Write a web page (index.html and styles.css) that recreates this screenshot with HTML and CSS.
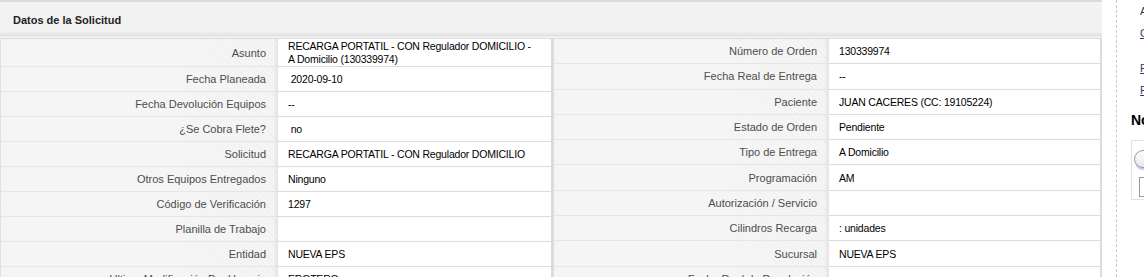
FILE: index.html
```html
<!DOCTYPE html>
<html lang="es">
<head>
	<meta charset="UTF-8">
	<title>Datos de la Solicitud</title>
	<link rel="stylesheet" href="styles.css">
</head>
<body>
	<div class="page">
		<div class="main">
			<div class="panel-head">Datos de la Solicitud</div>
			<div class="details">
				<table class="info info-left">
					<colgroup><col class="c-lbl"><col class="c-val"></colgroup>
					<tr><td class="lbl">Asunto</td><td class="val">RECARGA PORTATIL - CON Regulador DOMICILIO - A Domicilio (130339974)</td></tr>
					<tr><td class="lbl">Fecha Planeada</td><td class="val">&nbsp;2020-09-10</td></tr>
					<tr><td class="lbl">Fecha Devolución Equipos</td><td class="val">--</td></tr>
					<tr><td class="lbl">¿Se Cobra Flete?</td><td class="val">&nbsp;no</td></tr>
					<tr><td class="lbl">Solicitud</td><td class="val">RECARGA PORTATIL - CON Regulador DOMICILIO</td></tr>
					<tr><td class="lbl">Otros Equipos Entregados</td><td class="val">Ninguno</td></tr>
					<tr><td class="lbl">Código de Verificación</td><td class="val">1297</td></tr>
					<tr><td class="lbl">Planilla de Trabajo</td><td class="val"></td></tr>
					<tr><td class="lbl">Entidad</td><td class="val">NUEVA EPS</td></tr>
					<tr><td class="lbl">Ultima Modificación Por Usuario</td><td class="val">EROTERO</td></tr>
				</table>
				<table class="info info-right">
					<colgroup><col class="c-lbl"><col class="c-val"></colgroup>
					<tr><td class="lbl">Número de Orden</td><td class="val">130339974</td></tr>
					<tr><td class="lbl">Fecha Real de Entrega</td><td class="val">--</td></tr>
					<tr><td class="lbl">Paciente</td><td class="val">JUAN CACERES (CC: 19105224)</td></tr>
					<tr><td class="lbl">Estado de Orden</td><td class="val">Pendiente</td></tr>
					<tr><td class="lbl">Tipo de Entrega</td><td class="val">A Domicilio</td></tr>
					<tr><td class="lbl">Programación</td><td class="val">AM</td></tr>
					<tr><td class="lbl">Autorización / Servicio</td><td class="val"></td></tr>
					<tr><td class="lbl">Cilindros Recarga</td><td class="val">: unidades</td></tr>
					<tr><td class="lbl">Sucursal</td><td class="val">NUEVA EPS</td></tr>
					<tr><td class="lbl">Fecha Real de Devolución</td><td class="val"></td></tr>
				</table>
			</div>
		</div>
		<div class="side">
			<p class="side-text">Acciones</p>
			<p><a href="#">Cancelar</a></p>
			<p class="gap"><a href="#">Formato</a></p>
			<p><a href="#">Formato</a></p>
			<h3>Notas</h3>
			<div class="note-box">
				<div class="pill"></div>
				<div class="check"></div>
			</div>
		</div>
	</div>
</body>
</html>
```

FILE: styles.css
```css
html, body {
	margin: 0;
	padding: 0;
	background-color: #fff;
	overflow: hidden;
}
body {
	font-family: "Liberation Sans", Arial, sans-serif;
	font-size: 11px;
	color: #000;
}
.page {
	display: flex;
	width: 1200px;
}
.main {
	width: 1102px;
	flex: none;
	border-top: 2px solid #dadada;
}
.panel-head {
	height: 36px;
	line-height: 37px;
	padding-left: 13px;
	font-weight: bold;
	color: #1e1e1e;
	background: linear-gradient(to bottom, #f3f3f3 0, #f1f1f1 82%, #e2e2e2 94%, #fbfbfb 100%);
}
.details {
	display: flex;
	border-top: 1px solid #dcdcdc;
}
.info {
	table-layout: fixed;
	border-collapse: separate;
	border-spacing: 0;
	flex: none;
}
.info-left {
	width: 554px;
	border-left: 1px solid #e0e0e0;
	border-right: 3px solid #dcdcdc;
}
.info-left .c-lbl {
	width: 276px;
}
.info-right {
	width: 548px;
	border-right: 2px solid #dcdcdc;
}
.info-right .c-lbl {
	width: 274px;
}
.info td {
	height: 23px;
	padding: 1px 0 0;
	line-height: 13px;
	vertical-align: middle;
}
.info .lbl {
	text-align: right;
	padding-right: 11px;
	color: #4d4d4d;
	border-bottom: 1px solid #e6e6e6;
	background: linear-gradient(to right, #f5f5f5 0, #f5f5f5 55%, rgba(245, 245, 245, 0.4) 100%),
		repeating-linear-gradient(45deg, #f5f5f5 0, #f5f5f5 3px, #ebebeb 3px, #ebebeb 4px);
	box-shadow: inset -3px 0 3px -1px rgba(0, 0, 0, 0.05);
}
.info .val {
	padding-left: 10px;
	padding-right: 16px;
	font-size: 10.5px;
	letter-spacing: -0.2px;
	border-left: 1px solid #e4e4e4;
	border-bottom: 1px solid #dcdcdc;
	background-color: #fff;
}
.side {
	flex: none;
	margin-left: 14px;
	padding-left: 14px;
	width: 200px;
	min-height: 277px;
	border-left: 1px dashed #c8c8c8;
}
.side p {
	margin: 0;
	padding-left: 9px;
	height: 22px;
	line-height: 22px;
}
.side .side-text {
	color: #333;
}
.side .gap {
	margin-top: 13px;
}
.side a {
	color: #2a3f6b;
	text-decoration: underline;
}
.side h3 {
	margin: 9px 0 0;
	font-size: 14px;
	line-height: 20px;
	color: #000;
}
.note-box {
	margin-top: 10px;
	height: 60px;
	border: 1px solid #e2e2e2;
	padding: 9px 0 0 2px;
	box-sizing: border-box;
}
.pill {
	width: 40px;
	height: 16px;
	border: 1px solid #9a9a9a;
	border-radius: 10px;
	background: linear-gradient(to bottom, #fff, #e8e8e8);
	box-shadow: 0 3px 0 -1px #c6c6ee;
}
.check {
	margin: 9px 0 0 5px;
	width: 14px;
	height: 18px;
	border: 1px solid #999;
	background-color: #fff;
}
```
